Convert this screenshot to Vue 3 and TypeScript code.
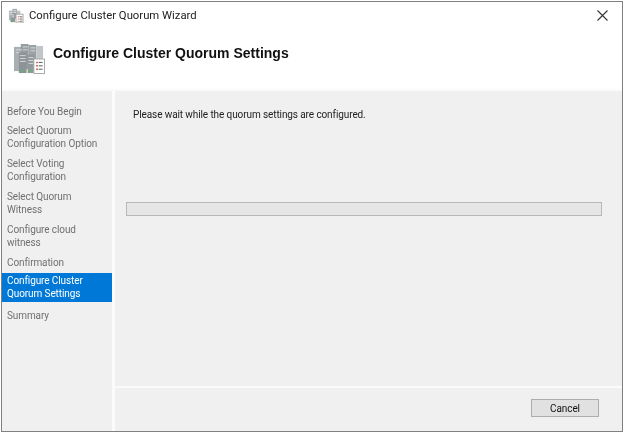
<script setup lang="ts">
const steps = [
  { label: 'Before You Begin', lines: 1 },
  { label: 'Select Quorum Configuration Option', lines: 2 },
  { label: 'Select Voting Configuration', lines: 2 },
  { label: 'Select Quorum Witness', lines: 2 },
  { label: 'Configure cloud witness', lines: 2 },
  { label: 'Confirmation', lines: 1 },
  { label: 'Configure Cluster Quorum Settings', lines: 2, active: true },
  { label: 'Summary', lines: 1 },
]
</script>

<template>
  <div class="page">
    <div class="window">
      <div class="titlebar">
        <svg class="small-icon" width="16" height="15" viewBox="0 0 18 17">
          <rect x="1" y="3" width="5" height="11" fill="#b4babc" />
          <rect x="5" y="1" width="5" height="11" fill="#9ca3a6" />
          <rect x="10" y="3" width="4" height="9" fill="#bfc3c5" />
          <rect x="3" y="6" width="5" height="10" fill="#8f979a" />
          <path d="M2 5h3M6 3h3M2 7h3M6 5h3M4 8h3M4 10h3" stroke="#e6e9ea" stroke-width="1" />
          <rect x="3" y="14" width="2" height="2" fill="#5cb85c" />
          <rect x="9" y="7" width="8" height="10" fill="#fff" stroke="#a0a0a0" stroke-width="1" />
          <path d="M11 10h1M11 12.500h1M11 15h1" stroke="#c0392b" stroke-width="1.200" />
          <path d="M13 10h3M13 12.500h3M13 15h3" stroke="#555" stroke-width="1" />
        </svg>
        <span class="title">Configure Cluster Quorum Wizard</span>
        <svg class="close" width="11" height="11" viewBox="0 0 11 11">
          <path d="M0.500 0.500L10.500 10.500M10.500 0.500L0.500 10.500" stroke="#333" stroke-width="1.100" fill="none" />
        </svg>
      </div>
      <div class="header">
        <svg width="31" height="31" viewBox="0 0 32 32">
          <rect x="0" y="3" width="10" height="25" fill="#a8afb2" />
          <rect x="7" y="0" width="8" height="26" fill="#969da1" />
          <rect x="15" y="1" width="8" height="25" fill="#9ba2a6" />
          <rect x="23" y="2" width="7" height="24" fill="#c2c5c7" />
          <rect x="5" y="9" width="8" height="21" fill="#8c9498" />
          <rect x="14" y="11" width="7" height="19" fill="#92999d" />
          <path d="M2 6h6M9 3h5M17 4h5M2 9h3M9 6h5M17 7h5M6 12h6M15 14h5M6 15h6M15 17h5M6 18h6M15 20h5" stroke="#d5d9db" stroke-width="1" />
          <rect x="7" y="27" width="2" height="2" fill="#5cb85c" />
          <rect x="15" y="27" width="2" height="2" fill="#5cb85c" />
          <rect x="20.500" y="15.500" width="11" height="15" fill="#fff" stroke="#a8a8a8" stroke-width="1" />
          <path d="M23 19h1.500M23 22.500h1.500M23 26h1.500" stroke="#c0392b" stroke-width="1.500" />
          <path d="M25.500 19h4M25.500 22.500h4M25.500 26h4" stroke="#555" stroke-width="1" />
        </svg>
        <h1 class="heading">Configure Cluster Quorum Settings</h1>
      </div>
      <div class="body">
        <nav class="sidebar">
          <div
            v-for="s in steps"
            :key="s.label"
            class="step"
            :class="{ active: s.active, single: s.lines === 1 }"
          >{{ s.label }}</div>
        </nav>
        <main class="content">
          <div class="pane">
            <p class="message">Please wait while the quorum settings are configured.</p>
            <div class="progress"></div>
          </div>
          <div class="footer">
            <button class="cancel" type="button">Cancel</button>
          </div>
        </main>
      </div>
    </div>
  </div>
</template>

<style>
html, body { margin: 0; padding: 0; background: #fff; }
</style>

<style scoped>
.page {
  width: 624px;
  height: 433px;
  padding: 1px;
  box-sizing: border-box;
  background: #fff;
  font-family: Roboto, "Liberation Sans", sans-serif;
}
.window {
  height: 100%;
  box-sizing: border-box;
  border: 1px solid #808080;
  display: flex;
  flex-direction: column;
  background: #fff;
  filter: blur(0.3px);
}
.titlebar {
  height: 27px;
  display: flex;
  align-items: center;
  padding: 0 14px 0 6px;
  flex: none;
}
.title {
  margin-left: 5px;
  font-size: 11.300px;
  color: #222;
  flex: 1;
}
.close { flex: none; }
.header {
  height: 60px;
  flex: none;
  display: flex;
  align-items: flex-start;
  padding: 15px 0 0 12px;
  box-sizing: border-box;
  gap: 8px;
}
.heading {
  margin: 1px 0 0;
  font-family: "Liberation Sans", Arial, sans-serif;
  font-size: 14px;
  font-weight: 700;
  color: #111;
}
.body {
  flex: 1;
  display: flex;
  min-height: 0;
  border-top: 2px solid #fafafa;
}
.sidebar {
  width: 113px;
  flex: none;
  background: #f0f0f0;
  border-right: 3px solid #fbfbfb;
  box-sizing: border-box;
  padding-top: 15px;
  display: flex;
  flex-direction: column;
}
.step {
  font-size: 10px;
  letter-spacing: -0.1px;
  line-height: 12.500px;
  color: #707070;
  padding: 0 5px;
  margin-bottom: 8px;
  box-sizing: border-box;
}
.step.single { margin-bottom: 6.500px; }
.step.active {
  background: #0078d7;
  color: #fff;
  padding: 2px 5px;
  margin-top: -3px;
  margin-bottom: 8px;
}
.content {
  flex: 1;
  display: flex;
  flex-direction: column;
  min-width: 0;
}
.pane {
  flex: 1;
  background: #f0f0f0;
  padding: 17px 20px 0 11px;
  border-bottom: 2px solid #fbfbfb;
}
.message {
  margin: 0 0 0 7px;
  font-size: 10px;
  letter-spacing: -0.1px;
  line-height: 14px;
  color: #222;
}
.progress {
  margin-top: 80px;
  height: 14px;
  box-sizing: border-box;
  background: #e6e6e6;
  border: 1px solid #b8b8b8;
}
.footer {
  height: 43px;
  flex: none;
  background: #f0f0f0;
  display: flex;
  justify-content: flex-end;
  align-items: flex-start;
  padding: 11px 23px 0 0;
  box-sizing: border-box;
}
.cancel {
  width: 68px;
  height: 18px;
  padding: 0;
  background: #e1e1e1;
  border: 1px solid #adadad;
  font-family: inherit;
  font-size: 10px;
  letter-spacing: -0.1px;
  color: #111;
}
</style>
